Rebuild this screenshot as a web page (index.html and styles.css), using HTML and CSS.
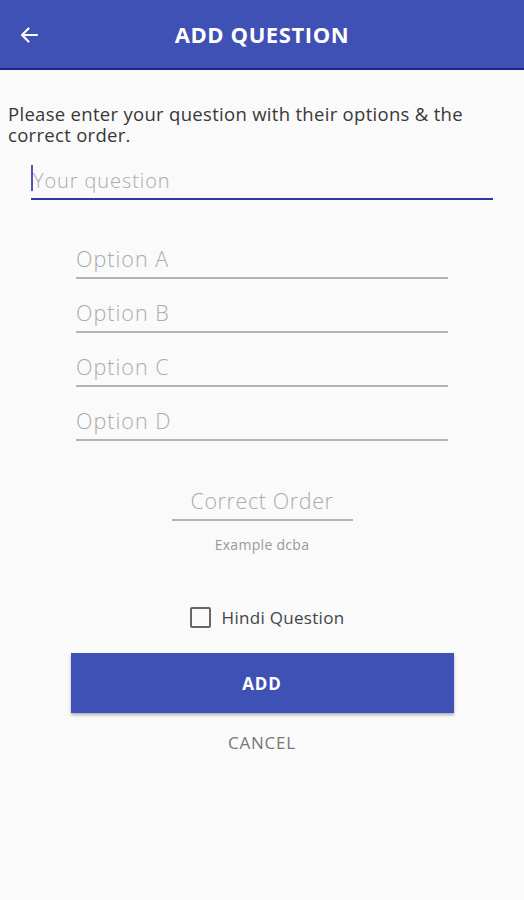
FILE: index.html
```html
<!DOCTYPE html>
<html>
<head>
<meta charset="utf-8">
<link rel="stylesheet" href="styles.css">
</head>
<body>
<header class="appbar">
  <svg class="back" width="24" height="24" viewBox="0 0 24 24"><path d="M20 12H5M11.5 5.5L5 12l6.5 6.5" fill="none" stroke="#fff" stroke-width="2.2" stroke-linecap="round" stroke-linejoin="round"/></svg>
  <h1 class="title">ADD QUESTION</h1>
</header>
<main class="content">
  <p class="intro">Please enter your question with their options &amp; the correct order.</p>
  <div class="field question"><span class="cursor"></span><span class="ph">Your question</span></div>
  <div class="options">
    <div class="field option"><span class="ph">Option A</span></div>
    <div class="field option"><span class="ph">Option B</span></div>
    <div class="field option"><span class="ph">Option C</span></div>
    <div class="field option"><span class="ph">Option D</span></div>
  </div>
  <div class="field order"><span class="ph">Correct Order</span></div>
  <div class="hint">Example dcba</div>
  <label class="check"><span class="box"></span><span class="check-label">Hindi Question</span></label>
  <button class="btn-add">ADD</button>
  <div class="cancel">CANCEL</div>
</main>
</body>
</html>
```
FILE: styles.css
```css
html, body {
  margin: 0;
  padding: 0;
  background: #fafafa;
  font-family: "Open Sans", "Noto Sans", sans-serif;
}
.appbar {
  height: 68px;
  background: #3f51b5;
  border-bottom: 2px solid #1e2a8a;
  display: flex;
  align-items: center;
  position: relative;
}
.back {
  position: absolute;
  left: 17px;
  top: 23px;
}
.title {
  margin: 0;
  width: 100%;
  text-align: center;
  color: #fff;
  font-size: 22px;
  font-weight: 700;
  letter-spacing: 0.6px;
}
.content {
  display: flex;
  flex-direction: column;
  align-items: center;
}
.intro {
  align-self: flex-start;
  max-width: 480px;
  margin: 33px 8px 0 8px;
  font-size: 18.5px;
  line-height: 21px;
  color: #383838;
  letter-spacing: 0.3px;
}
.field {
  display: flex;
  align-items: flex-end;
  border-bottom: 2px solid #b3b3b3;
  line-height: 24px;
  padding-bottom: 6px;
}
.ph {
  color: #ababab;
  font-size: 21.5px;
  font-weight: 300;
  line-height: 24px;
  letter-spacing: 1px;
}
.question {
  align-self: flex-start;
  margin-left: 31px;
  width: 462px;
  margin-top: 20px;
  padding-bottom: 5px;
  border-bottom: 2px solid #2b3a9f;
}
.question .ph {
  font-size: 20px;
  letter-spacing: 0.9px;
}
.cursor {
  width: 2px;
  height: 26px;
  background: #4a57b8;
  margin-bottom: 2px;
}
.options {
  margin-top: 47px;
  display: flex;
  flex-direction: column;
  gap: 22px;
}
.option {
  width: 372px;
}
.order {
  margin-top: 48px;
  width: 181px;
  justify-content: center;
}
.order .ph {
  letter-spacing: 0.6px;
}
.hint {
  margin-top: 14px;
  font-size: 14px;
  color: #999;
  letter-spacing: 0.3px;
}
.check {
  margin-top: 52px;
  display: flex;
  align-items: center;
  gap: 11px;
  margin-left: 10px;
}
.box {
  width: 17px;
  height: 17px;
  border: 2px solid #666;
  border-radius: 2px;
}
.check-label {
  font-size: 17px;
  color: #444;
  letter-spacing: 0.3px;
}
.btn-add {
  margin-top: 24px;
  width: 383px;
  height: 60px;
  border: none;
  background: #3f51b5;
  color: #fff;
  font-family: inherit;
  font-size: 17px;
  font-weight: 700;
  letter-spacing: 0.8px;
  box-shadow: 0 2px 3px rgba(0,0,0,0.3);
}
.cancel {
  margin-top: 18px;
  font-size: 17px;
  color: #777;
  letter-spacing: 0.8px;
}
```
